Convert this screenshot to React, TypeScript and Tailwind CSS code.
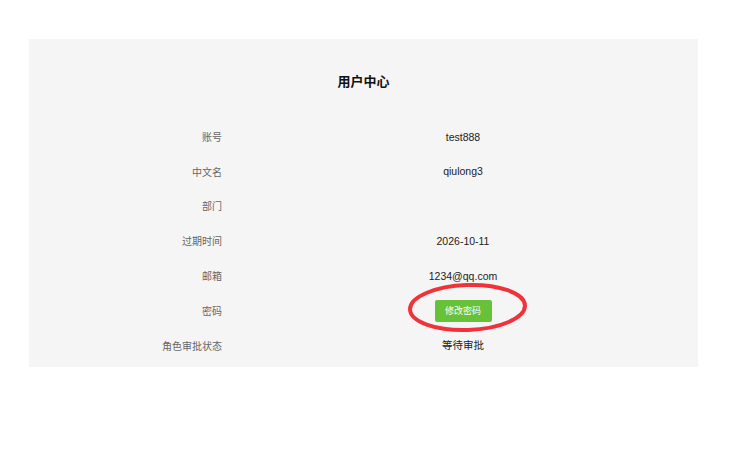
import React from 'react';

const rows: { label: string; value?: string; button?: boolean }[] = [
  { label: '账号', value: 'test888' },
  { label: '中文名', value: 'qiulong3' },
  { label: '部门', value: '' },
  { label: '过期时间', value: '2026-10-11' },
  { label: '邮箱', value: '1234@qq.com' },
  { label: '密码', button: true },
  { label: '角色审批状态', value: '等待审批' },
];

export default function App() {
  return (
    <div
      className="relative w-[755px] h-[449px] bg-white overflow-hidden"
      style={{ fontFamily: '"Liberation Sans", "Noto Sans CJK SC", sans-serif' }}
    >
      <div className="ml-[29px] mt-[39px] w-[669px] h-[328px] bg-[#f5f5f5] pt-[33px]">
        <h2 className="h-[20px] leading-[20px] text-center text-[13px] font-bold text-[#111]">
          用户中心
        </h2>
        <div className="mt-[28px]">
          {rows.map((r) => (
            <div key={r.label} className="flex items-center h-[34.8px]">
              <div className="w-[193px] text-right text-[10px] text-[#666]">{r.label}</div>
              <div className="flex-1 pl-[6px] flex justify-center text-[10.5px] text-[#222]">
                {r.button ? (
                  <button className="w-[57px] h-[22px] rounded-[2px] bg-[#67c23a] text-white text-[9px] leading-[22px]">
                    修改密码
                  </button>
                ) : (
                  <span>{r.value}</span>
                )}
              </div>
            </div>
          ))}
        </div>
      </div>

      {/* red annotation circle */}
      <svg className="absolute left-0 top-0 pointer-events-none" width="755" height="449">
        <ellipse
          cx="467.5"
          cy="307.5"
          rx="57.5"
          ry="22.5"
          fill="none"
          stroke="#f0333a"
          strokeWidth="4"
          transform="rotate(-2 467.5 307.5)"
        />
      </svg>
    </div>
  );
}
